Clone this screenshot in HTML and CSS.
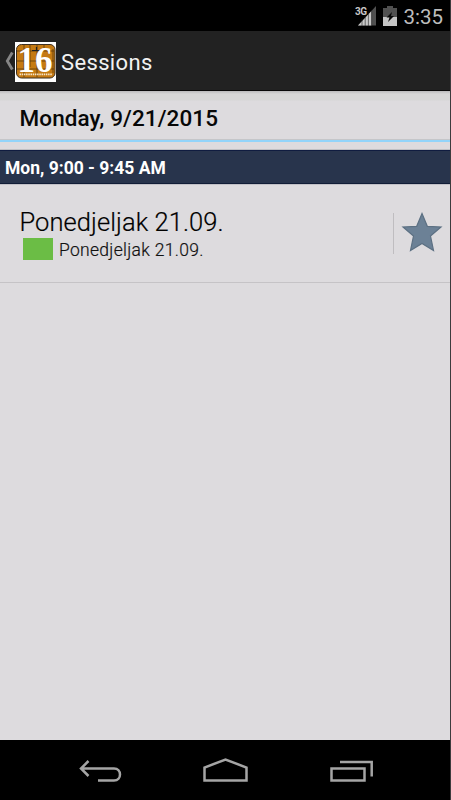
FILE: index.html
```html
<!DOCTYPE html>
<html lang="en">
<head>
<meta charset="utf-8">
<title>Sessions</title>
<link rel="stylesheet" href="styles.css">
</head>
<body>
<div class="screen">
  <header class="status">
    <svg class="signal" width="22" height="22" viewBox="0 0 22 22">
      <path d="M3 20.5 21 1V20.5Z" fill="#505050"/>
      <path d="M3 20.5 16.5 6V20.5Z" fill="#c8c8c8"/>
      <path d="M7 14V21M10.2 11V21M13.4 8V21M16.6 5V21" stroke="#222" stroke-width=".6"/>
      <path d="M0 0H12V7L9 11H0Z" fill="#000"/>
      <text x="0" y="9.5" class="network">3G</text>
    </svg>
    <svg class="battery" width="14" height="20" viewBox="0 0 14 20">
      <path d="M0 2H4V0H10V2H14V20H0Z" fill="#505050"/>
      <path d="M0 11H14V20H0Z" fill="#c4c4c4"/>
      <path d="M9 6 3.5 11.5H6.5L5 16 11 10H8Z" fill="#080808"/>
    </svg>
    <span class="clock">3:35</span>
  </header>
  <div class="actionbar">
    <svg class="up" width="9" height="20" viewBox="0 0 9 20"><path d="M7.3 1.5 2.3 10 7.3 18.5" fill="none" stroke="#858585" stroke-width="2.8"/></svg>
    <svg class="logo" width="41" height="40" viewBox="0 0 41 40">
      <path d="M0 0H41V40H0Z" fill="#fff"/>
      <rect x="1.5" y="2.5" width="38.5" height="33.5" rx="5" fill="#c57a13" stroke="#3f3020"/>
      <path d="M2 9H39M2 19H39M2 27H39M9 3V35M15 3V25M22 3V35M29 3V8M38 7V31" stroke="#5c3b0b" stroke-width=".8"/>
      <path d="M17 8.5H26M21.5 5V8.5" stroke="#222" stroke-width="1.2"/>
      <text x="2.5" y="29.5" class="logo-number">1</text>
      <text x="20" y="29.5" class="logo-number">6</text>
      <path d="M4.5 32.3H37" stroke="#f5e5ca" stroke-width="1.8" stroke-dasharray="1.5 .7"/>
    </svg>
    <h1 class="title">Sessions</h1>
  </div>
  <main class="content">
    <div class="day"><span class="day-label">Monday, 9/21/2015</span></div>
    <div class="slot"><span class="slot-label">Mon, 9:00 - 9:45 AM</span></div>
    <article class="session">
      <div class="details">
        <div class="session-title"><span>Ponedjeljak 21.09.</span></div>
        <div class="room"><i class="swatch"></i><span class="room-name">Ponedjeljak 21.09.</span></div>
      </div>
      <div class="favorite">
        <svg width="42" height="42" viewBox="0 0 42 42"><path d="M21 2.5 26.3 15.3 40 16 29.5 25 32.5 39.5 21 32.5 9.5 39.5 12.5 25 2 16 15.7 15.3Z" fill="#6c8196" stroke="#5c7083" stroke-width="1.2"/></svg>
      </div>
    </article>
  </main>
  <nav class="navbar">
    <svg width="450" height="60" viewBox="0 0 450 60" fill="none" stroke="#a5a5a5" stroke-width="2.5">
      <path d="M88.5 21 81 28.5 88.5 36M81 28.5H114C122 28.5 122 40.5 114 40.5H98"/>
      <path d="M204.5 40.5V27.5L225.5 19.5 246.5 27.5V40.5Z"/>
      <path d="M331.5 28.5H364.5V40.5H331.5ZM340 22H371.7V36.5"/>
    </svg>
  </nav>
</div>
</body>
</html>
```
FILE: styles.css
```css
* { box-sizing: border-box; }
body { margin: 0; background: #000; font-family: Roboto, sans-serif; }
svg { display: block; flex: none; overflow: visible; }
span, h1 { white-space: nowrap; }
.screen { width: 451px; height: 800px; display: flex; flex-direction: column; overflow: hidden; border-right: 1px solid #3c3c3e; }
.status { height: 31px; display: flex; justify-content: flex-end; align-items: flex-start; background: #000; padding: 5px 7px 0 0; }
.network { font: 700 10px Roboto, sans-serif; fill: #c8c8c8; letter-spacing: -.6px; }
.battery { margin: 1px 6px 0 6px; }
.clock { font-size: 20.5px; line-height: 24px; color: #bdbdbd; }
.actionbar { height: 60px; display: flex; align-items: center; background: #222; border-bottom: 1px solid #080808; padding-left: 5px; }
.logo { margin: 2px 5px 0 1px; }
.logo-number { font: 700 35px "Liberation Serif", serif; fill: #fff; }
.title { margin: 4px 0 0; color: #f2f2f2; font-size: 22px; line-height: 28px; font-weight: 400; letter-spacing: .35px; }
.content { flex: 1; background: #dddbde; }
.day { height: 51px; padding: 13px 0 0 19.5px; background: linear-gradient(#b9b9ba 0, #d6d6d6 3px, #d6d6d6 9px, #dddbde 10px); border-bottom: 2px solid #92d4fa; box-shadow: inset 0 -1px 0 #c5c6c9; }
.day-label { display: block; color: #070707; font-size: 22.5px; line-height: 28px; font-weight: 500; letter-spacing: .1px; }
.slot { height: 34px; margin-top: 8px; background: #28344c; border-top: 1px solid #101c40; border-bottom: 1px solid #111d37; padding: 5px; box-shadow: 0 -1px 0 #bfc0c4, 0 1px 0 #c2c1c7; }
.slot-label { display: block; color: #fff; font-size: 17.5px; line-height: 24px; font-weight: 700; }
.session { height: 99px; display: flex; justify-content: space-between; padding: 23px 7px 0 19px; border-bottom: 1px solid #c5c3c6; }
.session-title { color: #000; font-size: 25.5px; line-height: 31px; font-weight: 300; letter-spacing: .07px; padding-left: .5px; -webkit-text-stroke: .2px #000; }
.room { display: flex; align-items: center; height: 22px; padding-left: 4px; }
.swatch { width: 30px; height: 22px; background: #6bbd45; }
.room-name { margin: 2px 0 0 6px; font-size: 17.5px; line-height: 24px; color: #111; font-weight: 300; letter-spacing: .3px; -webkit-text-stroke: .2px #111; }
.favorite { height: 41px; margin-top: 6px; border-left: 1px solid #bfbdc0; padding-left: 7px; }
.favorite svg { margin-top: -2px; }
.navbar { height: 60px; background: #000; }
```
